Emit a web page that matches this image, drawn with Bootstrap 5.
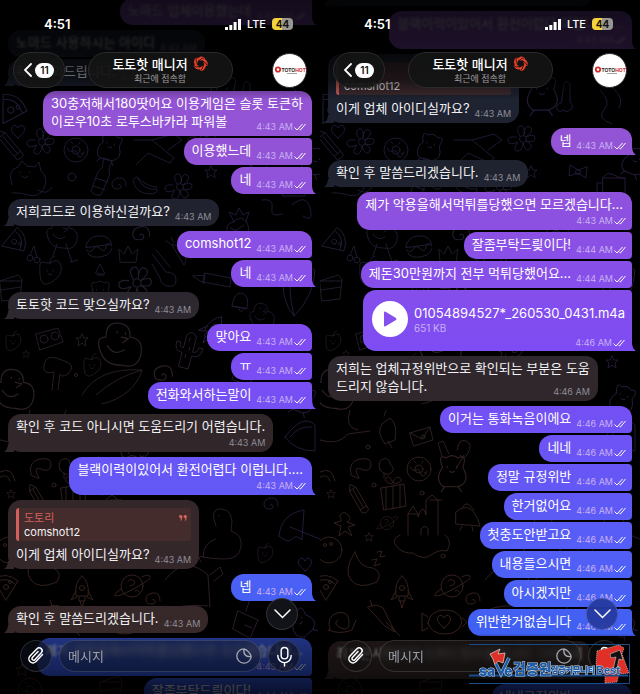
<!DOCTYPE html>
<html lang="ko">
<head>
<meta charset="utf-8">
<meta name="viewport" content="width=device-width, initial-scale=1">
<title>토토핫 매니저</title>
<link href="https://cdn.jsdelivr.net/npm/bootstrap@5.3.0/dist/css/bootstrap.min.css" rel="stylesheet">
<style>
body{background:#000;color:#fff;font-family:Inter,"Noto Sans CJK KR",sans-serif;font-size:13px;line-height:18px}
.phone{background:#000}
.phone+.phone .thread{margin-top:-32px}
.layer{inset:0;opacity:.85}
.thread{gap:2px;padding:0 8px;margin-top:-2px}
.bubble{width:fit-content;padding:3px 6px 4px 8px;white-space:nowrap;position:relative}
.bubble.in{padding-right:8px;border-radius:13px;align-self:flex-start;color:#f2f2f4;
  background:linear-gradient(180deg,#1c2233 0,#20232f 30%,#2d2830 44%,#31272a 62%,#34272a 80%,#3a2929 100%) fixed}
.bubble.out{border-radius:13px 4px 4px 13px;align-self:flex-end;
  background:linear-gradient(180deg,#9454d0 0,#9253d6 22%,#8a50e6 36%,#7e4cf3 50%,#7450f4 59%,#6557f6 69%,#4f60f6 82%,#3f60f2 91%,#2b50d8 100%) fixed}
.bubble.start{border-top-right-radius:12px;margin-top:3px}
.tail::after{content:"";position:absolute;bottom:0;width:10px;height:8px;background:inherit}
.out.tail::after{right:-4px;clip-path:path('M0 0H6Q6 5 10 8H0Z')}
.in.tail::after{left:-4px;clip-path:path('M10 0H4Q4 5 0 8H10Z')}
.line{display:flex;align-items:flex-end;gap:5px}
.line>.words{margin-bottom:2px}
.stack{display:flex;flex-direction:column;gap:2px}
.stack>.stamp{align-self:flex-end}
.out.stack>.words,.out.overlap>.words{margin-right:3px}
.overlap{display:grid}
.overlap>*{grid-area:1/1}
.overlap>.words{margin-bottom:2px}
.overlap>.stamp{align-self:end;justify-self:end}
.stamp{font-size:9px;line-height:11px;display:inline-flex;align-items:center;gap:1px;color:#8e8c96}
.out .stamp{color:#c9b0f4}
.ticks{width:12px;height:8px;fill:none;stroke:#fff;stroke-width:1}
.soft{filter:blur(1px)}
.quote{margin-top:5px;margin-bottom:4px;padding:3px 4px 2px 5px;border-left:3px solid #d2605c;border-radius:3px;background:#52302f99;font-size:11px;line-height:14px}
.quote-name{color:#d2605c}
.quote svg{width:8px;height:6px;margin-top:4px}
.audio{padding:11px 7px 3px 9px}
.audio-row{gap:6px}
.play{width:36px;height:36px;border-radius:50%;background:#fff}
.size{font-size:10px;line-height:12px;color:#c9b0f4}
.fade-top{top:0;height:100px;background:linear-gradient(180deg,#000d 0,#000c 50%,#0008 80%,#0000 100%)}
.fade-bottom{bottom:0;height:60px;background:linear-gradient(180deg,#0000 0,#0007 8%,#0009 60%,#000c 100%)}
.status{height:48px;padding:0 27px 0 44px;font-weight:600}
.status-net{font-size:11px;font-weight:500;gap:6px}
.battery{width:21px;height:12px;border-radius:4px;font-size:10px;line-height:12px;color:#111;background:linear-gradient(90deg,#f4d23c 46%,#9b9690 46%)}
.heading{display:grid;grid-template-columns:1fr auto 1fr;padding:4px 13px 0;align-items:center}
.glass{background:#141414e6;border:1px solid #2b2b2b;color:#fff}
.back{width:52px;height:36px;border-radius:18px;gap:3px}
.count{width:19px;height:15px;border-radius:8px;background:#fff;color:#111;font-size:10px;line-height:15px;font-weight:600}
.title-pill{width:145px;height:36px;border-radius:18px;padding-bottom:1px}
.title-pill h1{font-size:13px;line-height:18px;font-weight:500;gap:5px}
.title-pill p{font-size:9px;line-height:12px;color:#9b9b9b}
.avatar{width:35px;height:35px;border-radius:50%;background:#fff;border:1px solid #2b2b2b}
.composer{bottom:22px;padding:0 20px;gap:7px}
.round{width:32px;height:32px;border-radius:50%;background:#0b0f1a99;border:1px solid #ffffff22;color:#fff}
.field{height:32px;border-radius:16px;border:1px solid #ffffff22;background:#0b0f1a66;backdrop-filter:blur(3px);padding:0 8px}
.field input{font-size:13px;line-height:18px;color:#fff;background:none;border:0;box-shadow:none;padding:0}
.field input:focus{background:none;color:#fff;box-shadow:none}
.field input::placeholder{color:#9da0a8;opacity:1}
.down{right:22px;bottom:64px}
.phone:first-of-type .down{background:#111318}
.phone+.phone .down{background:#263aa0f2}
.warm .round,.warm .field{background:#1412128c}
.watermark{right:9px;bottom:9px;width:162px;height:42px}
.watermark text{fill:#1c5aa6;stroke:#c3d3e4;stroke-width:1;paint-order:stroke;font-weight:800}
</style>
<script src="https://cdn.jsdelivr.net/npm/bootstrap@5.3.0/dist/js/bootstrap.bundle.min.js"></script>
</head>
<body>

<svg width="0" height="0" class="position-absolute" aria-hidden="true">
<defs>
<symbol id="ticks" viewBox="0 0 12 8"><path d="M.5 4.5 3 7 8.5 1M5.5 6.2l.9.8L11.5 1"/></symbol>
<symbol id="swirl" viewBox="0 0 16 16"><g fill="#e5402c"><path id="blade" d="M3.200 7.500Q3 2 8.500.6 11 .2 12.800 2.200L11.600 4.400Q9.500 2.400 7 3.600 4.500 4.800 4.900 7.800Z"/><use href="#blade" transform="rotate(72 8 8)"/><use href="#blade" transform="rotate(144 8 8)"/><use href="#blade" transform="rotate(216 8 8)"/><use href="#blade" transform="rotate(288 8 8)"/></g><g fill="none" stroke="#141414" stroke-width=".8"><path id="slit" d="M4.800 8Q2.400 5.500 3.500 2"/><use href="#slit" transform="rotate(72 8 8)"/><use href="#slit" transform="rotate(144 8 8)"/><use href="#slit" transform="rotate(216 8 8)"/><use href="#slit" transform="rotate(288 8 8)"/></g></symbol>
<symbol id="clip" viewBox="0 0 20 20"><path fill="none" stroke="currentColor" stroke-width="1.5" stroke-linecap="round" d="M16.5 8.6 10 15.6a4.1 4.1 0 0 1-6-5.6l7-7.2a2.9 2.9 0 0 1 4.300 4l-6.500 6.900a1.600 1.600 0 0 1-2.400-2.200l5.600-6"/></symbol>
<symbol id="mic" viewBox="0 0 20 22"><g fill="none" stroke="currentColor" stroke-width="1.500" stroke-linecap="round"><rect x="6.500" y="1.500" width="7" height="12" rx="3.500"/><path d="M3 10v.5a7 7 0 0 0 14 0V10M10 17.500V21"/></g></symbol>
<symbol id="sticker" viewBox="0 0 16 16"><path fill="none" stroke="#a6a8b0" stroke-width="1.300" stroke-linejoin="round" d="M8 .8a7.200 7.200 0 1 0 7.200 7.700C10 9.500 7 6 8 .8Q13.500 3 15.200 8.500"/></symbol>
<symbol id="bars" viewBox="0 0 16 11"><path fill="#fff" d="M0 8h3v3H0zM4.300 6h3v5h-3zM8.600 3h3v8h-3zM13 0h3v11h-3z"/></symbol>
<symbol id="brand" viewBox="0 0 32 12"><circle cx="4" cy="5.500" r="2.200" fill="none" stroke="#d32a2a" stroke-width="1.800"/><text x="7.500" y="7.500" font-size="5" font-weight="800" fill="#222" font-family="Liberation Sans">TOTO<tspan fill="#d32a2a">HOT</tspan></text><path stroke="#888" stroke-width=".8" d="M13 9.500h10"/></symbol>

<linearGradient id="tint" x1="0" y1="0" x2="0" y2="1"><stop offset="0" stop-color="#222044"/><stop offset=".35" stop-color="#25223c"/><stop offset=".6" stop-color="#3a2828"/><stop offset="1" stop-color="#4a2c22"/></linearGradient>
<linearGradient id="side" x1="0" y1="0" x2="1" y2="0"><stop offset=".45" stop-color="#2c1c4a" stop-opacity="0"/><stop offset="1" stop-color="#30204c"/></linearGradient>
<g id="star"><path d="M0-6 2-2 6-2 3 1 4 6 0 3-4 6-3 1-6-2-2-2Z"/></g>
<g id="spiral"><path d="M0 0q2-2 3 1t-4 3-5-5 7-6 7 8"/></g>
<g id="donut"><circle r="12"/><circle r="4"/><path d="M-9-2q3 5 6 3t5 4 6-3M-5-8l2 2M4-8l-1 2M7 4l-2-1"/></g>
<g id="pizza"><path d="M-12-6Q0-14 12-4L0 15ZM-9-3Q0-9 9-1"/><circle cy="2" r="2.500"/><circle cx="4" cy="-3" r="1.500"/></g>
<g id="burger"><path d="M-13-2Q-10-12 1-11T13-1ZM-13 1q4 4 7 0t7 1 6-1 6 1M-12 4q2 6 12 6t12-6"/></g>
<g id="cake"><path d="M-10-6 8-12 12-8 10 12-8 14ZM-10-6 12-6M-9 3 11 0"/></g>
<g id="blossom"><circle r="3.500"/><path d="M-3-3q-5-8 0-10t4 9q1-11 6-8t-4 10q9-4 9 1t-9 3q8 4 4 8t-7-6q-1 9-6 8t1-9q-9 4-10-1t8-4"/></g>
<g id="critter"><path d="M-8-2Q-12-14-5-10q5-4 10 0 8-4 4 8 7 12-4 16h-12q-8-6-1-16ZM-4-3v1M4-3v1M-2 1q2 2 4 0M-6 14l-3 4M5 14l3 4"/></g>
<g id="rocket"><path d="M0-16q8 7 6 20h-12q-2-13 6-20ZM-6-1-11 8-5 5M6-1l5 9-6-3M-3 5v4h6V5M-2 9l2 7 2-7"/><circle cy="-4" r="2.500"/></g>
<g id="pencil"><path d="M-4-14 0-20 4-14 4 14q-4 4-8 0ZM-4-14H4M-4 10H4M0-13V9"/></g>
<g id="fruit"><path d="M0-6q9-6 11 3T2 13t-12-7 2-13 8 1ZM0-6q0-6 5-7M-3 1v1M3 1v1M-2 5q2 2 4 0"/></g>
<g id="bird"><path d="M-14 8q-4-10 4-10 0-11 9-10t8 10q10 1 8 12t-14 8q-12 0-15-10ZM-2-6v1M4-5v1M1-2l5 1-4 3M-9 4q5 8 12 3"/></g>
<g id="cactus"><path d="M-5 18V4q-9 0-8-10h4q0 6 4 5V-14q5-8 10 0V1q5 0 5-6h4q1 10-9 10v13ZM-1-12v3M1-3v3M-1 5v3"/></g>
<g id="planet"><circle r="11"/><path d="M-11 3q-10 7-5 7t21-9 13-11-8 1M-4-5q3-3 6 0t-4 5M3 5q3-2 4 1"/></g>
<g id="bow"><path d="M0-2-8-7-9 4 0 1 8 6 9-5Z"/><circle r="2.500"/></g>
<g id="heart"><path d="M0 6Q-9-1-6-5t6 1q3-5 6-1T0 6Z"/></g>

<mask id="drawn" maskUnits="userSpaceOnUse" x="0" y="0" width="320" height="694">
<g fill="none" stroke="#fff" stroke-width=".9" stroke-linecap="round" stroke-linejoin="round">
<use href="#pizza" transform="translate(12 108) rotate(30) scale(1.200)"/><use href="#heart" x="18" y="132"/>
<use href="#pencil" transform="translate(11 146) rotate(-40)"/><use href="#blossom" transform="translate(42 142)"/>
<use href="#donut" transform="translate(76 150)"/><use href="#critter" transform="translate(110 146) rotate(15)"/>
<path d="M12 185q-5-16 6-18l4-6 5 5 8 1 4-5 2 9q8 7 3 17t-16 7-16-2M20 172v1M30 172v1M22 176l3 2 3-2M38 190q9 6 14-3"/>
<path d="M104 158l8 3-3 8q2 6-2 12l-6 14q-7 1-10-4l5-14q2-7 6-9ZM95 178l13 4M93 186l12 4"/>
<use href="#spiral" x="118" y="185"/><circle cx="72" cy="177" r="4"/>
<path d="M133 180q2 14 18 14 7-1 6-5-14 2-20-12ZM138 178q10 9 19 9"/><use href="#blossom" transform="translate(180 187)"/>
<path d="M134 140h18l22 18-4 5-22-10-12 12M152 140l22-6 8 6-14 10"/><use href="#star" x="211" y="172"/>
<path d="M244 84q3-5 6 0v18q5 5 0 8t-6 0q-5 3-7-1t4-6Z"/><path d="M280 90q12 12 4 20t8 14M293 88q12 10 6 20"/>
<use href="#blossom" x="203" y="139"/><use href="#bow" x="258" y="172"/><use href="#critter" transform="translate(222 92) scale(1.300)"/>
<path d="M283 178h22v18h-22ZM283 183h-6v10h6M283 178q4-7 11-3t11 3"/><use href="#critter" transform="translate(315 160) rotate(20)"/>
<use href="#bird" transform="translate(62 230)"/><path d="M57 244l-4 12M66 244l6 18M70 262l8-2"/>
<circle cx="30" cy="258" r="3"/><circle cx="37" cy="260" r="3"/><path d="M30 255l4-9 3 11"/>
<use href="#pizza" transform="translate(16 241) rotate(70)"/><use href="#burger" transform="translate(99 247) rotate(-10)"/>
<path d="M120 262l-1-13 5 5 4-8 4 8 6-5-2 13Z"/><path d="M152 254l14 18q10 0 10 8t-8 6-8-8l-8-14M156 250l14 17"/>
<use href="#spiral" transform="translate(140 235) scale(1.200)"/>
<path d="M233 222q9-8 14 1t-5 15-14-4 5-12ZM234 222l-5-10 7 3 3-7 4 7 6-3-3 10M230 228l14 6M230 234l14-9"/>
<path d="M172 245l12 20q5-6-2-18ZM172 245l-6-4M174 243l-3-6"/><use href="#fruit" x="50" y="269"/>
<path d="M96 272l4-8 4 8q2 3-4 2t-4-2ZM97 275h7"/><use href="#cake" transform="translate(10 287)"/>
<use href="#blossom" transform="translate(137 283) scale(1.200)"/><use href="#critter" transform="translate(100 292) scale(.9)"/>
<path d="M205 273l26 5-1 9-27-5ZM193 276l12-1-1 8Z"/><path d="M232 306q2-14 10-13 8 3 5 15ZM232 306l15 3M239 309q1 5 4 1"/>
<path d="M283 270q14-12 32 0-1 26-21 46-14-16-11-46ZM292 268q-5 20 2 48"/><use href="#bird" transform="translate(262 313) scale(.8)"/>
<path d="M262 200q12-2 10 8t10 6M292 205q14-12 18 3t-7 8"/>
<path d="M36 334l22-6 5 14-23 8Z"/><circle cx="44" cy="339" r="4"/><circle cx="55" cy="336" r="4"/>
<use href="#star" x="82" y="340"/><use href="#fruit" transform="translate(13 340) scale(.7)"/><use href="#bird" transform="translate(120 340) scale(1.400)"/>
<use href="#cactus" transform="translate(188 350) rotate(15)"/><use href="#fruit" transform="translate(92 364) scale(.8)"/>
<path d="M52 390l2-18q-12 3-10-7t12-7 14 6-2 10q-6 4-8 0l-2 16M82 395q16-28 60-25-8 26-40 34M96 395q20-18 46-25"/>
<use href="#bird" transform="translate(14 385) scale(1.300)"/><use href="#star" transform="translate(26 354) scale(.6)"/>
<use href="#spiral" transform="translate(162 375) scale(1.300)"/><use href="#rocket" transform="translate(212 330) rotate(35)"/>
<use href="#star" x="292" y="362"/><use href="#critter" transform="translate(303 398) rotate(20)"/><use href="#cake" transform="translate(245 370) rotate(25)"/>
<path d="M0 440q18 6 28-6l22-3M30 410q-6 18 8 20M62 424l8-6q8 6 5 22l-10 4q-9-12-3-20ZM68 441l4 7M64 416l2-6"/>
<path d="M90 433l20-6 3 13-19 6ZM90 433l12 6 8-12"/><circle cx="103" cy="437" r="2"/>
<use href="#critter" transform="translate(132 470) scale(1.200)"/><path d="M122 456l-4-13 5-2 6 13M137 450q2-12 9-9t2 12-8 2M144 455l-8 14"/>
<path d="M31 475q-3-14 9-16t11 6-10 4-2 9ZM60 470q-3-9 3-11t7 5q6 5 1 9t-11-3ZM64 473v5"/>
<use href="#donut" x="99" y="469"/><path d="M0 472q12-6 15 9M0 477q8-4 10 4"/>
<use href="#star" transform="translate(11 494) scale(.7)"/><use href="#pencil" transform="translate(39 500) rotate(-30) scale(.9)"/>
<path d="M61 488l23-4 2 22-22 4ZM66 487v22M73 486v22M80 485v22M72 484q-9-2-6-6t7 5q2-8 7-5t-6 6"/>
<path d="M88 535V514l5-8 5 8v3q5-15 8-2V500l6-5 6 5v35M101 535v-6q4-5 7 0v6M88 514h10M110 500h12M80 535q-10 5-3 12t16 6q10 8 18 2t16-4q6-10-2-16"/>
<path d="M136 512q16-14 24 14l-24-2ZM143 507q3-8 11 3M142 526l-2 4M152 527l1 4"/><path d="M20 515q4-5 8 0t-1 7l8 3-7 2 4 9-7-5-6 5 2-10-7-3 7-2Z"/>
<use href="#planet" transform="translate(67 523) scale(.6)"/><use href="#star" transform="translate(49 537) scale(.7)"/>
<circle cx="9" cy="550" r="13"/><circle cx="5" cy="545" r="1.500"/><circle cx="11" cy="544" r="1.500"/>
<path d="M35 552q-12 18-4 28t26 2q6-10-4-14-14 0-18-16ZM52 560l5-1-3 7 6-2M57 552l5-1-2 6 5-1"/>
<use href="#rocket" transform="translate(82 592)"/><use href="#planet" x="132" y="586"/><use href="#pizza" transform="translate(6 585)"/>
<path d="M216 526q-7-18 6-17t9 22q12 4 10 16t-16 12-22-2q0-14 13-18M219 515v1M204 557q-8-2-3 5"/>
<path d="M279 536q2-22 25-26l-2 30q-6-6-10-1t-13-3ZM290 527l30 12"/><use href="#fruit" transform="translate(265 552) scale(.7)"/>
<use href="#spiral" x="270" y="505"/><use href="#heart" x="305" y="565"/><path d="M285 437q18-24 30-12v26q-20 0-30-14ZM290 437q10-12 22-10"/>
<path d="M165 580q20-26 43-5l2 32M210 575l10-8 3 7-9 7M168 610q12-6 40-4"/><use href="#spiral" x="152" y="600"/>
<path d="M10 630q-4-14 7-17t12 8-8 7-3-8M8 630q12 5 24 0l4-10"/><path d="M48 607q8-4 15 1l12 24-10-6ZM66 622l14 14M52 606l-2-6"/>
<path d="M108 623q2-13 17-13t17 12q-3 12-17 12t-17-11ZM108 617l-6-4v18l6-3M142 618l5 4-5 5"/><use href="#heart" x="124" y="622"/>
<path d="M238 611l20 9-8 18-17-9ZM246 611l4-12 7-2M245 625l7 3"/><use href="#critter" transform="translate(300 622) rotate(-40)"/>
<use href="#star" transform="translate(22 670)"/><use href="#bow" x="95" y="660"/><use href="#donut" transform="translate(30 690)"/><use href="#cake" transform="translate(110 688)"/>
<circle cx="68" cy="205" r="1"/><circle cx="150" cy="300" r="2"/><circle cx="76" cy="375" r="1.500"/><circle cx="54" cy="485" r="2"/><circle cx="102" cy="493" r="2"/><circle cx="48" cy="447" r="2"/><circle cx="123" cy="556" r="2"/><circle cx="250" cy="470" r="2"/><circle cx="280" cy="475" r="2"/><circle cx="212" cy="203" r="2"/>
</g></mask>
<g id="wall" mask="url(#drawn)"><rect width="320" height="694" fill="url(#tint)"/><rect width="320" height="694" fill="url(#side)"/></g>
</defs>
</svg>

<main class="row g-0 vh-100 overflow-hidden">

<section class="phone col-6 vh-100 position-relative overflow-hidden" aria-label="대화 1">
<svg class="layer position-absolute w-100 h-100" viewBox="0 0 320 694" preserveAspectRatio="xMidYMid slice" aria-hidden="true"><use href="#wall"/></svg>
<div class="thread d-flex flex-column position-relative">
<div class="bubble out tail line"><span class="words soft">노마드 업체이용했는데</span><span class="stamp soft">4:43 AM<svg class="ticks"><use href="#ticks"/></svg></span></div>
<div class="bubble in start line"><span class="words soft">노마드 사용하시는 아이디</span><span class="stamp soft">4:43 AM</span></div>
<div class="bubble in tail line"><span class="words">확인도와드립니다.</span><span class="stamp">4:43 AM</span></div>
<div class="bubble out start overlap"><span class="words">30충저해서180땃어요 이용게임은 슬롯 토큰하<br>이로우10초 로투스바카라 파워볼</span><span class="stamp">4:43 AM<svg class="ticks"><use href="#ticks"/></svg></span></div>
<div class="bubble out line"><span class="words">이용했느데</span><span class="stamp">4:43 AM<svg class="ticks"><use href="#ticks"/></svg></span></div>
<div class="bubble out tail line"><span class="words">네</span><span class="stamp">4:43 AM<svg class="ticks"><use href="#ticks"/></svg></span></div>
<div class="bubble in start tail line"><span class="words">저희코드로 이용하신걸까요?</span><span class="stamp">4:43 AM</span></div>
<div class="bubble out start line"><span class="words">comshot12</span><span class="stamp">4:43 AM<svg class="ticks"><use href="#ticks"/></svg></span></div>
<div class="bubble out tail line"><span class="words">네</span><span class="stamp">4:43 AM<svg class="ticks"><use href="#ticks"/></svg></span></div>
<div class="bubble in start tail line"><span class="words">토토핫 코드 맞으실까요?</span><span class="stamp">4:43 AM</span></div>
<div class="bubble out start line"><span class="words">맞아요</span><span class="stamp">4:43 AM<svg class="ticks"><use href="#ticks"/></svg></span></div>
<div class="bubble out line"><span class="words">ㅠ</span><span class="stamp">4:43 AM<svg class="ticks"><use href="#ticks"/></svg></span></div>
<div class="bubble out tail line"><span class="words">전화와서하는말이</span><span class="stamp">4:43 AM<svg class="ticks"><use href="#ticks"/></svg></span></div>
<div class="bubble in start tail stack"><span class="words">확인 후 코드 아니시면 도움드리기 어렵습니다.</span><span class="stamp">4:43 AM</span></div>
<div class="bubble out start tail stack"><span class="words">블랙이력이있어서 환전어렵다 이럽니다....</span><span class="stamp">4:43 AM<svg class="ticks"><use href="#ticks"/></svg></span></div>
<div class="bubble in start tail">
<div class="quote d-flex justify-content-between"><div><div class="quote-name">도토리</div><div>comshot12</div></div><svg viewBox="0 0 8 6" fill="#d2605c"><path d="M0 1.500A1.700 1.700 0 1 1 3.400 2Q3.400 5 1 6 2 4.500 1.700 3.300 0 3.300 0 1.500ZM4.500 1.500A1.700 1.700 0 1 1 7.900 2Q7.900 5 5.500 6 6.500 4.500 6.200 3.300 4.500 3.300 4.500 1.500Z"/></svg></div>
<div class="line"><span class="words">이게 업체 아이디실까요?</span><span class="stamp">4:43 AM</span></div></div>
<div class="bubble out start tail line"><span class="words">넵</span><span class="stamp">4:43 AM<svg class="ticks"><use href="#ticks"/></svg></span></div>
<div class="bubble in start tail line"><span class="words">확인 후 말씀드리겠습니다.</span><span class="stamp">4:43 AM</span></div>
<div class="bubble out start stack"><span class="words soft">제가 악용을해서먹튀를당했으면 모르겠습니다...</span><span class="stamp">4:43 AM<svg class="ticks"><use href="#ticks"/></svg></span></div>
<div class="bubble out line"><span class="words">잘좀부탁드릦이다!</span><span class="stamp">4:44 AM<svg class="ticks"><use href="#ticks"/></svg></span></div>
</div>
<div class="fade-top position-absolute w-100"></div>
<div class="fade-bottom position-absolute w-100"></div>
<header class="position-absolute top-0 w-100">
<div class="status d-flex align-items-center justify-content-between"><span>4:51</span><span class="status-net d-flex align-items-center"><svg width="16" height="11"><use href="#bars"/></svg><span>LTE</span><span class="battery text-center fw-bold">44</span></span></div>
<div class="heading">
<button type="button" class="glass back d-flex align-items-center justify-content-center p-0" aria-label="뒤로"><svg width="8" height="14" viewBox="0 0 8 14" fill="none" stroke="#fff" stroke-width="1.800" stroke-linecap="round"><path d="M7 1 1 7l6 6"/></svg><span class="count">11</span></button>
<div class="glass title-pill d-flex flex-column align-items-center justify-content-center"><h1 class="m-0 d-flex align-items-center">토토핫 매니저<svg width="15" height="15"><use href="#swirl"/></svg></h1><p class="m-0">최근에 접속함</p></div>
<button type="button" class="avatar p-0 ms-auto d-flex align-items-center justify-content-center" aria-label="프로필"><svg width="32" height="12"><use href="#brand"/></svg></button>
</div>
</header>
<button type="button" class="round down position-absolute d-flex align-items-center justify-content-center p-0" aria-label="아래로"><svg width="17" height="10" viewBox="0 0 17 10" fill="none" stroke="#fff" stroke-width="1.500" stroke-linecap="round"><path d="M1 1l7.500 7.500L16 1"/></svg></button>
<form class="composer position-absolute w-100 d-flex align-items-center">
<button type="button" class="round d-flex align-items-center justify-content-center p-0 flex-shrink-0" aria-label="첨부"><svg width="20" height="20"><use href="#clip"/></svg></button>
<div class="field d-flex align-items-center flex-grow-1"><label class="visually-hidden" for="m1">메시지</label><input id="m1" class="form-control" type="text" placeholder="메시지"><svg class="flex-shrink-0" width="16" height="16"><use href="#sticker"/></svg></div>
<button type="button" class="round d-flex align-items-center justify-content-center p-0 flex-shrink-0" aria-label="음성"><svg width="19" height="21"><use href="#mic"/></svg></button>
</form>
</section>

<section class="phone warm col-6 vh-100 position-relative overflow-hidden" aria-label="대화 2">
<svg class="layer position-absolute w-100 h-100" viewBox="0 0 320 694" preserveAspectRatio="xMidYMid slice" aria-hidden="true"><use href="#wall"/></svg>
<div class="thread d-flex flex-column position-relative">
<div class="bubble in tail stack"><span class="words">확인 후 코드 아니시면 도움드리기 어렵습니다.</span><span class="stamp">4:43 AM</span></div>
<div class="bubble out start tail stack"><span class="words soft">블랙이력이있어서 환전어렵다 이럽니다....</span><span class="stamp soft">4:43 AM<svg class="ticks"><use href="#ticks"/></svg></span></div>
<div class="bubble in start tail">
<div class="quote d-flex justify-content-between"><div><div class="quote-name">도토리</div><div>comshot12</div></div></div>
<div class="line"><span class="words">이게 업체 아이디실까요?</span><span class="stamp">4:43 AM</span></div></div>
<div class="bubble out start tail line"><span class="words">넵</span><span class="stamp">4:43 AM<svg class="ticks"><use href="#ticks"/></svg></span></div>
<div class="bubble in start tail line"><span class="words">확인 후 말씀드리겠습니다.</span><span class="stamp">4:43 AM</span></div>
<div class="bubble out start stack"><span class="words">제가 악용을해서먹튀를당했으면 모르겠습니다...</span><span class="stamp">4:43 AM<svg class="ticks"><use href="#ticks"/></svg></span></div>
<div class="bubble out line"><span class="words">잘좀부탁드릦이다!</span><span class="stamp">4:44 AM<svg class="ticks"><use href="#ticks"/></svg></span></div>
<div class="bubble out line"><span class="words">제돈30만원까지 전부 먹튀당했어요...</span><span class="stamp">4:44 AM<svg class="ticks"><use href="#ticks"/></svg></span></div>
<div class="bubble out tail audio d-flex flex-column">
<div class="audio-row d-flex align-items-center"><button type="button" class="play border-0 p-0 d-flex align-items-center justify-content-center" aria-label="재생"><svg width="14" height="16" viewBox="0 0 14 16"><path fill="#8450ee" d="M1 1.500Q1 0 2.500.8L13 7q1 1 0 2L2.500 15.200Q1 16 1 14.500Z"/></svg></button><div><div>01054894527*_260530_0431.m4a</div><div class="size">651 KB</div></div></div>
<span class="stamp align-self-end">4:46 AM<svg class="ticks"><use href="#ticks"/></svg></span></div>
<div class="bubble in start overlap"><span class="words">저희는 업체규정위반으로 확인되는 부분은 도움<br>드리지 않습니다.</span><span class="stamp">4:46 AM</span></div>
<div class="bubble out start line"><span class="words">이거는 통화녹음이에요</span><span class="stamp">4:46 AM<svg class="ticks"><use href="#ticks"/></svg></span></div>
<div class="bubble out line"><span class="words">네네</span><span class="stamp">4:46 AM<svg class="ticks"><use href="#ticks"/></svg></span></div>
<div class="bubble out line"><span class="words">정말 규정위반</span><span class="stamp">4:46 AM<svg class="ticks"><use href="#ticks"/></svg></span></div>
<div class="bubble out line"><span class="words">한거없어요</span><span class="stamp">4:46 AM<svg class="ticks"><use href="#ticks"/></svg></span></div>
<div class="bubble out line"><span class="words">첫충도안받고요</span><span class="stamp">4:46 AM<svg class="ticks"><use href="#ticks"/></svg></span></div>
<div class="bubble out line"><span class="words">내용들으시면</span><span class="stamp">4:46 AM<svg class="ticks"><use href="#ticks"/></svg></span></div>
<div class="bubble out line"><span class="words">아시겠지만</span><span class="stamp">4:46 AM<svg class="ticks"><use href="#ticks"/></svg></span></div>
<div class="bubble out tail line"><span class="words">위반한거없습니다</span><span class="stamp">4:46 AM<svg class="ticks"><use href="#ticks"/></svg></span></div>
<div class="bubble in start tail stack"><span class="words soft">죄지은사람이면 도와드릴수없습니다 그리하세</span><span class="stamp soft">4:46 AM</span></div>
<div class="bubble out start line"><span class="words">내내규정위반</span><span class="stamp">4:46 AM<svg class="ticks"><use href="#ticks"/></svg></span></div>
</div>
<div class="fade-top position-absolute w-100"></div>
<div class="fade-bottom position-absolute w-100"></div>
<header class="position-absolute top-0 w-100">
<div class="status d-flex align-items-center justify-content-between"><span>4:51</span><span class="status-net d-flex align-items-center"><svg width="16" height="11"><use href="#bars"/></svg><span>LTE</span><span class="battery text-center fw-bold">44</span></span></div>
<div class="heading">
<button type="button" class="glass back d-flex align-items-center justify-content-center p-0" aria-label="뒤로"><svg width="8" height="14" viewBox="0 0 8 14" fill="none" stroke="#fff" stroke-width="1.800" stroke-linecap="round"><path d="M7 1 1 7l6 6"/></svg><span class="count">11</span></button>
<div class="glass title-pill d-flex flex-column align-items-center justify-content-center"><h1 class="m-0 d-flex align-items-center">토토핫 매니저<svg width="15" height="15"><use href="#swirl"/></svg></h1><p class="m-0">최근에 접속함</p></div>
<button type="button" class="avatar p-0 ms-auto d-flex align-items-center justify-content-center" aria-label="프로필"><svg width="32" height="12"><use href="#brand"/></svg></button>
</div>
</header>
<button type="button" class="round down position-absolute d-flex align-items-center justify-content-center p-0" aria-label="아래로"><svg width="17" height="10" viewBox="0 0 17 10" fill="none" stroke="#fff" stroke-width="1.500" stroke-linecap="round"><path d="M1 1l7.500 7.500L16 1"/></svg></button>
<form class="composer position-absolute w-100 d-flex align-items-center">
<button type="button" class="round d-flex align-items-center justify-content-center p-0 flex-shrink-0" aria-label="첨부"><svg width="20" height="20"><use href="#clip"/></svg></button>
<div class="field d-flex align-items-center flex-grow-1"><label class="visually-hidden" for="m2">메시지</label><input id="m2" class="form-control" type="text" placeholder="메시지"><svg class="flex-shrink-0" width="16" height="16"><use href="#sticker"/></svg></div>
<button type="button" class="round d-flex align-items-center justify-content-center p-0 flex-shrink-0" aria-label="음성"><svg width="19" height="21"><use href="#mic"/></svg></button>
</form>
<svg class="watermark position-absolute" viewBox="0 0 162 42" aria-label="save검증원 검증커뮤니티Best">
<path fill="none" stroke="#1a4c8c" d="M0 1.500h160.500v39H0"/>
<path fill="#e02f26" stroke="#ddd" stroke-width=".7" stroke-dasharray="1 1" d="M128 8 150 2 155 5 153 11 160 30 152 31 151 26 148 39 136 40 136 32 127 22Z"/>
<path fill="#111" stroke="#ddd" stroke-width=".5" d="M141 11 151 7 154 17 150 16 147 30 143 31 147 14 142 15Z"/>
<path fill="#e02f26" stroke="#ddd" stroke-width=".7" d="M21 11 31 6 29 11 36 10 34 20 29 18 26 22 24 16Z"/>
<path fill="none" stroke="#1a4c8c" stroke-width="2" d="M0 32.500h159"/>
<path fill="none" stroke="#b9cbdc" stroke-width="3.500" d="M27 21l5 10 8-16"/><path fill="none" stroke="#1c5aa6" stroke-width="2.500" d="M27 21l5 10 8-16"/>
<text x="10" y="33" font-size="14" font-family="Inter">sa</text><text x="35" y="33" font-size="14" font-family="Inter">e</text>
<text x="44" y="31" font-size="14" font-family="Noto Sans CJK KR">검증원</text>
<text x="82" y="30" font-size="8" font-family="Noto Sans CJK KR">검증커뮤니티</text>
<text x="127" y="31" font-size="11" font-family="Liberation Sans">Best</text>
</svg>
</section>
</main>
</body>
</html>
